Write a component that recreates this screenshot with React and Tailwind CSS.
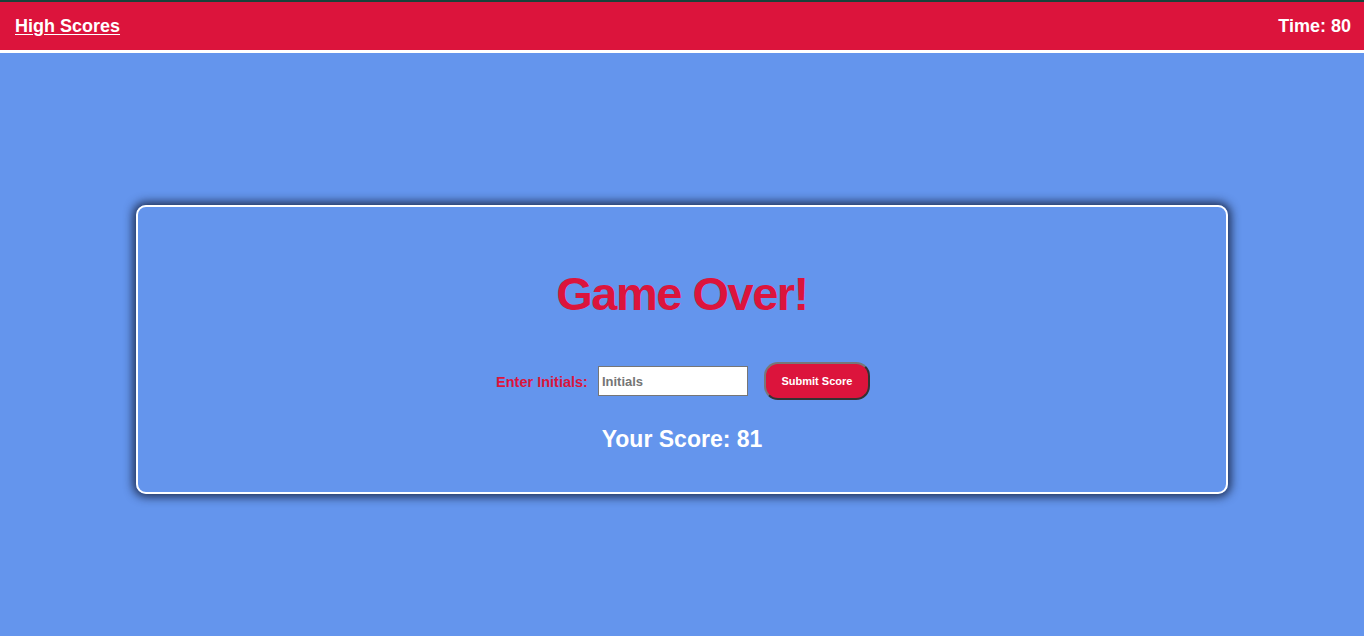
export default function App() {
  return (
    <div className="min-h-[636px] bg-[#6495ed]" style={{ fontFamily: '"Liberation Sans", Arial, sans-serif' }}>
      <header className="h-[53px] bg-[#dc143c] border-t-2 border-[#17433a] border-b-[3px] border-b-white flex items-center justify-between px-[15px]">
        <a href="#" className="text-white font-bold text-[18px] underline underline-offset-2">High Scores</a>
        <span className="text-white font-bold text-[18px] mr-[-2px]">Time: 80</span>
      </header>
      <div className="pt-[152px] flex justify-center">
        <div className="w-[80%] h-[289px] border-2 border-white rounded-[10px] shadow-[0_0_10px_3px_rgba(20,30,60,0.85)] flex flex-col items-center">
          <h1 className="mt-[59px] text-[47px] leading-[56px] font-bold text-[#dc143c] tracking-[-1.5px]">Game Over!</h1>
          <div className="mt-[40px] flex items-center pl-[2px]">
            <label className="text-[#dc143c] font-bold text-[14.5px] mr-[10px] mt-[3px]">Enter Initials:</label>
            <input placeholder="Initials" className="w-[150px] h-[30px] bg-white border border-[#767676] px-[3px] text-[13px] font-bold placeholder:text-[#757575] outline-none" />
            <button className="ml-[16px] w-[106px] h-[38px] rounded-[14px] bg-[#dc143c] border-2 border-[#333] border-t-[#777] border-l-[#777] text-white font-bold text-[11px]">Submit Score</button>
          </div>
          <div className="mt-[22px] text-white font-bold text-[23px]">Your Score: 81</div>
        </div>
      </div>
    </div>
  );
}
